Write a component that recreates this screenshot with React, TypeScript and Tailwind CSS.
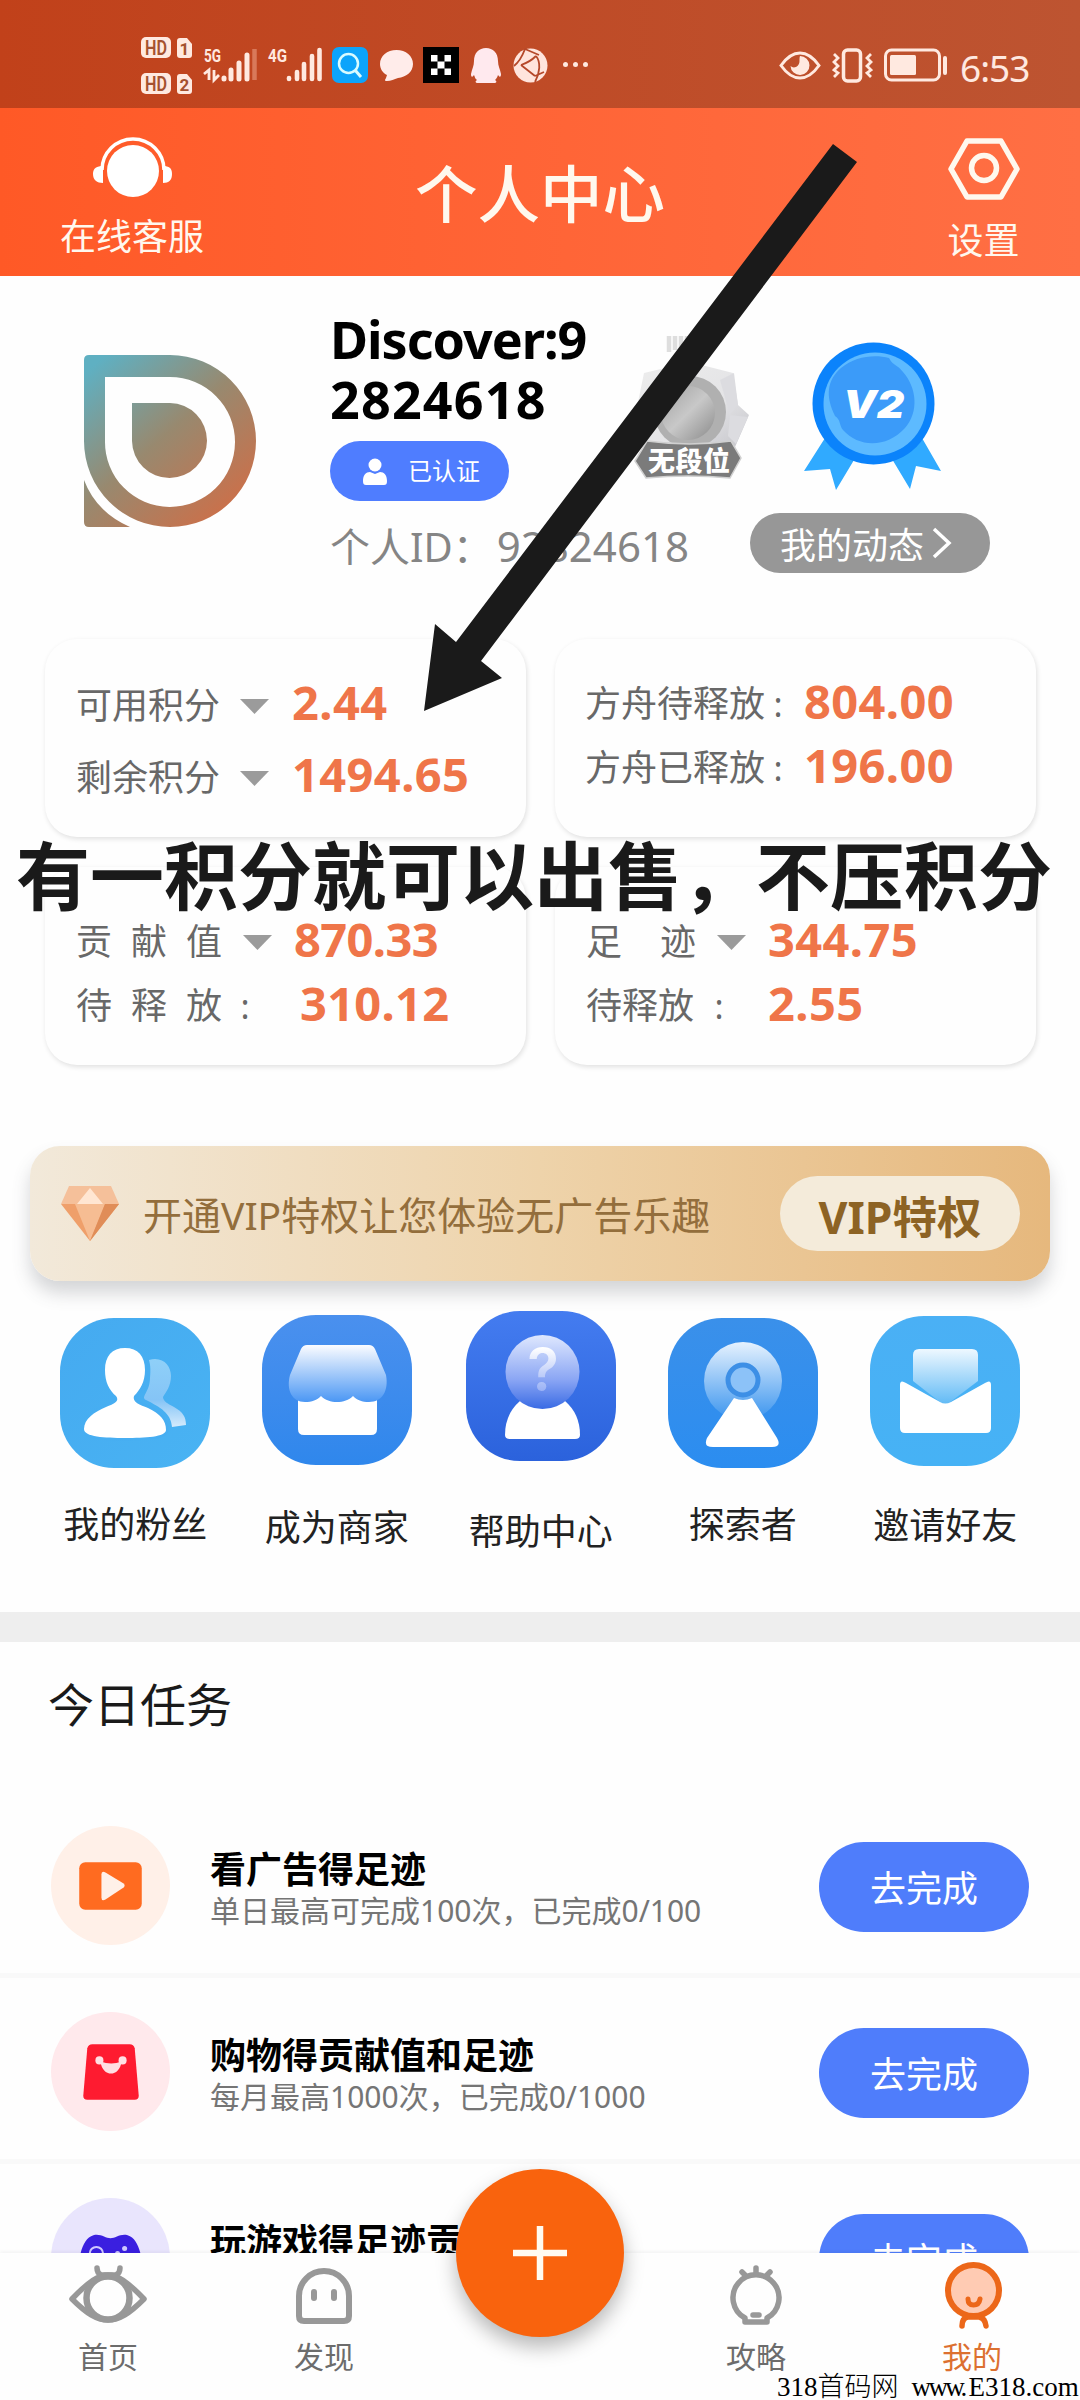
import React from 'react';
import { clsx } from 'clsx';

const GRAY = '#989898';

interface StatRow {
  label: string;
  labelClass: string;
  mark: 'caret' | 'colon';
  markClass: string;
  value: string;
  valueClass: string;
}

interface StatCard {
  padClass: string;
  rowClass: string;
  rows: StatRow[];
}

const statCards: StatCard[] = [
  {
    padClass: 'pt-[31px] pl-[31px] h-[198px]',
    rowClass: 'h-[72px]',
    rows: [
      { label: '可用积分', labelClass: 'w-[164px]', mark: 'caret', markClass: '', value: '2.44', valueClass: '-mt-[8px] ml-[23px] tracking-[0.4px]' },
      { label: '剩余积分', labelClass: 'w-[164px]', mark: 'caret', markClass: '', value: '1494.65', valueClass: '-mt-[8px] ml-[23px] tracking-[0.4px]' },
    ],
  },
  {
    padClass: 'pt-[33px] pl-[30px] h-[198px]',
    rowClass: 'h-16',
    rows: [
      { label: '方舟待释放', labelClass: 'w-[180px]', mark: 'colon', markClass: 'w-[26px]', value: '804.00', valueClass: '-mt-[6px] ml-[13px] tracking-[0.4px]' },
      { label: '方舟已释放', labelClass: 'w-[180px]', mark: 'colon', markClass: 'w-[26px]', value: '196.00', valueClass: '-mt-[6px] ml-[13px] tracking-[0.4px]' },
    ],
  },
  {
    padClass: 'pt-[43px] pl-[31px] h-[198px]',
    rowClass: 'h-16',
    rows: [
      { label: '贡献值', labelClass: 'w-[167px] tracking-[19px]', mark: 'caret', markClass: '', value: '870.33', valueClass: '-mt-[5px] ml-[22px] tracking-[-0.6px]' },
      { label: '待释放', labelClass: 'w-[167px] tracking-[19px]', mark: 'colon', markClass: 'w-1', value: '310.12', valueClass: '-mt-[6px] ml-[53px] tracking-[0.3px]' },
    ],
  },
  {
    padClass: 'pt-[43px] pl-[31px] h-[198px]',
    rowClass: 'h-16',
    rows: [
      { label: '足迹', labelClass: 'w-[131px] tracking-[38px]', mark: 'caret', markClass: '', value: '344.75', valueClass: '-mt-[5px] ml-[22px] tracking-[0.4px]' },
      { label: '待释放', labelClass: 'w-[131px]', mark: 'colon', markClass: 'w-1', value: '2.55', valueClass: '-mt-[6px] ml-[47px] tracking-[0.4px]' },
    ],
  },
];

function StatusBar() {
  return (
    <div className="flex h-[108px] shrink-0 bg-gradient-to-r from-[#c1411a] to-[#bd5431] text-[#ffe9e0]">
      <div className="ml-[141px] mt-[37px] flex flex-col gap-[15px]">
        {['1', '2'].map((n) => (
          <svg key={n} className="h-[21px] w-[51px] overflow-visible" viewBox="0 0 51 21">
            <rect width="30" height="21" rx="5" fill="#ffe9e0" />
            <path d="M39 1h7l5 6v11q0 3-3 3h-9q-3 0-3-3V4q0-3 3-3Z" fill="#ffe9e0" />
            <text x="4" y="17.500" textLength="22" lengthAdjust="spacingAndGlyphs" fontFamily="Roboto" fontWeight="600" fontSize="20" fill="#a5512f">HD</text>
            <text x="43.500" y="18" textAnchor="middle" fontFamily="Roboto" fontWeight="700" fontSize="17" fill="#a5512f">{n}</text>
          </svg>
        ))}
      </div>

      {/* Signal strength, one block per SIM */}
      <svg className="ml-[12px] mt-[47px] h-9 w-[53px] overflow-visible" viewBox="0 0 53 36">
        <text x="0" y="15" textLength="17" lengthAdjust="spacingAndGlyphs" fontFamily="Roboto" fontWeight="700" fontSize="19" fill="#ffe9e0">5G</text>
        <path d="M0 27l5-4v10M10 23v10l5-5" stroke="#ffe9e0" strokeWidth="2.800" fill="none" />
        <path d="M20 31v1M27 23v9M35 16v16M43 8v24" stroke="#ffe9e0" strokeWidth="5" strokeLinecap="round" />
        <path d="M50.500 2v31" stroke="#d8795a" strokeWidth="4.500" />
      </svg>
      <svg className="ml-[11px] mt-[47px] h-9 w-[54px] overflow-visible" viewBox="0 0 54 36">
        <text x="0" y="15" textLength="19" lengthAdjust="spacingAndGlyphs" fontFamily="Roboto" fontWeight="700" fontSize="19" fill="#ffe9e0">4G</text>
        <path d="M21 31v1M29 25v7M36 17v15M44 9v23M51.500 3v29" stroke="#ffe9e0" strokeWidth="4.600" strokeLinecap="round" />
      </svg>

      <svg className="ml-[10px] mt-[47px] size-9" viewBox="0 0 36 36">
        <rect width="36" height="36" rx="7" fill="#0ca4fb" />
        <circle cx="16.500" cy="16.500" r="9.500" fill="none" stroke="#d8fbff" strokeWidth="2.500" />
        <path d="M23 23l6 7" stroke="#d8fbff" strokeWidth="3" />
      </svg>
      <svg className="ml-[11px] mt-[49px] h-[34px] w-[35px]" viewBox="0 0 35 34">
        <path d="M17.500 1C27 1 34 7 34 15s-7 13-15 14c-4 1-7 3-11 3-3 0-2-1-1-3l1-3C4 24 1 20 1 15 1 7 8 1 17.500 1Z" fill="#ffecea" />
      </svg>
      <svg className="ml-[9px] mt-[47px] size-9" viewBox="0 0 36 36">
        <path d="M0 0h36v36H0z" fill="#000" />
        <path d="M8 8h6.500v6.500H8zM21.500 8H28v6.500h-6.500zM14.500 14.500h7v7h-7zM8 21.500h6.500V28H8zM21.500 21.500H28V28h-6.500z" fill="#fff" />
      </svg>
      <svg className="ml-[12px] mt-[47px] h-9 w-[30px]" viewBox="0 0 30 36">
        <path d="M15 1c7 0 12 5 12 13 0 5 2 8 3 13 0 3-1 4-3 1-1 3-2 4-3 5 2 1 2 3-1 3H7c-3 0-3-2-1-3-2-1-2-3-3-5-2 3-3 2-3-1 1-5 3-8 3-13C3 6 8 1 15 1Z" fill="#ffe9ee" />
      </svg>
      <svg className="ml-[12px] mt-[48px] size-[35px]" viewBox="0 0 35 35">
        <circle cx="17.500" cy="17.500" r="17" fill="#ffe4dc" />
        <path d="M12 1l14 6M12 1C9 9 6 14 1 18M23 8c5 6 4 17-1 26M8 17l14 11M8 17c6-2 11-5 15-9M22 28l9-4" stroke="#b5482a" strokeWidth="1.800" fill="none" />
      </svg>
      <div className="ml-[15px] mt-[62px] flex gap-[5px]">
        <i className="size-[5px] rounded-full bg-[#ffe9e0]" />
        <i className="size-[5px] rounded-full bg-[#ffe9e0]" />
        <i className="size-[5px] rounded-full bg-[#ffe9e0]" />
      </div>

      <svg className="ml-auto mt-[51px] h-[29px] w-[42px]" viewBox="0 0 42 29">
        <path d="M2 14.500C8 6 14 2 21 2s13 4 19 12.500C34 23 28 27 21 27S8 23 2 14.500Z" fill="none" stroke="#ffe9e0" strokeWidth="3" />
        <path d="M21 5a9.500 9.500 0 1 1-9.500 10c3 3 9 1 9-5 0-2 0-4 .5-5Z" fill="#ffe9e0" />
      </svg>
      <svg className="ml-[11px] mt-[48px] h-[35px] w-[41px]" viewBox="0 0 41 35">
        <rect x="11.500" y="2" width="17" height="31" rx="4" fill="none" stroke="#ffe9e0" strokeWidth="3.500" />
        <path d="M2 6l4 4-4 4 4 4-4 4 4 3-4 4M39 6l-4 4 4 4-4 4 4 4-4 3 4 4" fill="none" stroke="#ffe9e0" strokeWidth="2.800" />
      </svg>
      <svg className="ml-[11px] mt-[48px] h-[35px] w-[64px]" viewBox="0 0 64 35">
        <rect x="1.500" y="2" width="54" height="30" rx="6" fill="none" stroke="#ffe9e0" strokeWidth="3" />
        <rect x="6" y="7" width="26" height="20" rx="1.500" fill="#ffe9e0" />
        <path d="M61 10v15" stroke="#ffe9e0" strokeWidth="4" strokeLinecap="round" />
      </svg>
      <span className="ml-[12px] mr-[50px] mt-[48px] w-[70px] whitespace-nowrap text-[37px] leading-[40px] tracking-[-1px]">6:53</span>
    </div>
  );
}

function Header() {
  return (
    <header className="flex h-[168px] shrink-0 justify-between bg-gradient-to-r from-[#ff5926] to-[#ff6f44] text-[#fff8ee]">
      <div className="flex w-[264px] flex-col items-center pt-[27px]">
        <svg className="h-[64px] w-[80px]" viewBox="0 0 80 64">
          <circle cx="41" cy="36" r="26" fill="#fff" />
          <path d="M10 35a31 31 0 0 1 62 0" fill="none" stroke="#fff" strokeWidth="3.500" />
          <path d="M11 31v17c-6 0-10-3-10-9s4-8 10-8ZM71 31v17c6 0 9-3 9-9s-3-8-9-8Z" fill="#fff" />
        </svg>
        <span className="mt-[16px] text-[36px] leading-[44px]">在线客服</span>
      </div>
      <h1 className="pt-[51px] text-[62.500px] font-medium leading-[70px]">个人中心</h1>
      <div className="flex w-[264px] flex-col items-center pl-[71px] pt-[29px]">
        <svg className="h-[64px] w-[72px]" viewBox="0 0 72 64">
          <path d="M19 4h34l16 28-16 28H19L3 32Z" fill="none" stroke="#fff8ee" strokeWidth="5.500" strokeLinejoin="round" />
          <circle cx="36" cy="31" r="12.500" fill="none" stroke="#fff8ee" strokeWidth="5.500" />
        </svg>
        <span className="mt-[18px] text-[36px] leading-[44px]">设置</span>
      </div>
    </header>
  );
}

function BrandMark() {
  return (
    <svg className="size-[172px]" viewBox="0 0 172 172">
      <defs>
        <linearGradient id="brand" gradientUnits="userSpaceOnUse" x1="10" y1="10" x2="140" y2="160">
          <stop offset="0" stopColor="#5fb0c2" />
          <stop offset="0.5" stopColor="#98896f" />
          <stop offset="1" stopColor="#cb704a" />
        </linearGradient>
      </defs>
      <path
        fill="url(#brand)"
        fillRule="evenodd"
        d="M0 5q0-5 5-5h81a86 86 0 0 1 0 172A86 86 0 0 1 0 86ZM21 22v64a65 65 0 1 0 65-64ZM48 48h38a37.500 37.500 0 1 1-38 38Z"
      />
      <path fill="url(#brand)" d="M0 125q12 32 46 47H5q-5 0-5-5Z" />
    </svg>
  );
}

function RankBadge() {
  return (
    <svg className="h-[145px] w-[116px]" viewBox="34 15 116 145">
      <defs>
        <linearGradient id="metal" x1="0" y1="0" x2="1" y2="1">
          <stop offset="0" stopColor="#ededed" />
          <stop offset="0.6" stopColor="#e4e4e6" />
          <stop offset="1" stopColor="#c4c4ca" />
        </linearGradient>
        <linearGradient id="core" x1="0" y1="0" x2="1" y2="1">
          <stop offset="0" stopColor="#a0a0a0" />
          <stop offset="0.5" stopColor="#c8c8c8" />
          <stop offset="1" stopColor="#8a8a8a" />
        </linearGradient>
      </defs>
      <path d="M69 16v16M75 16v14M81 16v12M87 16v10" stroke="#dedede" strokeWidth="4.500" />
      <path d="M90 42l43 11 5 32 11 10-14 32H50L36 92l8-39Z" fill="url(#metal)" />
      <path d="M120 60l14-7 4 32-8 10M130 95l18 2-12 27-8-8Z" fill="#dcdce0" />
      <circle cx="90" cy="92" r="36" fill="#b0b0b0" />
      <circle cx="88" cy="93" r="27" fill="url(#core)" />
      <path d="M47 121q43 6 84 0l10 17-11 20q-42-4-84 0L35 141Z" fill="#7b7b7b" stroke="#d0d0d0" strokeWidth="1.500" />
      <text x="48" y="151" textLength="82" fontFamily="'Noto Sans CJK SC', sans-serif" fontWeight="900" fontSize="27" fill="#fff">无段位</text>
    </svg>
  );
}

function LevelMedal() {
  return (
    <svg className="h-[150px] w-[140px]" viewBox="204 20 140 150">
      <path d="M226 117l-21 33 26-2 6 21 18-30ZM323 117l19 33-25-5-6 23-18-30Z" fill="#30aaff" />
      <circle cx="274.500" cy="82.500" r="61" fill="#0b83fb" />
      <circle cx="276" cy="83" r="51.500" fill="#5dbaff" />
      <path d="M290 37c4 8 8 6 14 14 14 16 16 40 2 56-18 20-46 20-62 2-4-5-2-10-8-14-10-20-8-36 6-48 14-12 34-14 48-10Z" fill="#3b9bf9" />
      <text x="244" y="97" textLength="61" lengthAdjust="spacingAndGlyphs" fontFamily="Inter, sans-serif" fontWeight="900" fontStyle="italic" fontSize="39" fill="#fff">V2</text>
    </svg>
  );
}

function Profile() {
  return (
    <section className="flex h-[363px] shrink-0">
      <div className="ml-[84px] mt-[79px]">
        <BrandMark />
      </div>
      <div className="ml-[74px] mt-[33px] w-[290px]">
        <p className="w-[290px] text-[52px] font-bold leading-[60px] text-black">
          <span className="block tracking-[-1px]">Discover:9</span>
          <span className="block tracking-[1.2px]">2824618</span>
        </p>
        <div className="mt-[12px] flex h-[60px] w-[179px] items-center rounded-full bg-[#4f7dff] pl-[32px] text-white">
          <svg className="h-[27px] w-[26px]" viewBox="0 0 26 27">
            <circle cx="13" cy="7" r="6.500" fill="#fff" />
            <path d="M1 23c0-6 3-9 7-9l5 2 5-2c4 0 7 3 7 9 0 3-1 4-3 4H4c-2 0-3-1-3-4Z" fill="#fff" />
          </svg>
          <span className="ml-[20px] text-[24px]">已认证</span>
        </div>
        <p className="mt-[17px] whitespace-nowrap text-[40px] leading-[56px] text-[#858585]">
          个人ID：<span className="ml-[4px] text-[42px]">92824618</span>
        </p>
      </div>
      <div className="ml-[14px] mt-[59px]">
        <RankBadge />
      </div>
      <div className="mt-[65px] flex w-[240px] flex-col items-center">
        <div className="pl-[6px]">
          <LevelMedal />
        </div>
        <button className="mt-[22px] flex h-[60px] w-[240px] items-center rounded-full bg-[#979797] pl-[30px] text-[36px] text-white">
          <span className="pt-[5px]">我的动态</span>
          <svg className="ml-[8px] h-[32px] w-[20px]" viewBox="0 0 20 32">
            <path d="M2 2l15 14L2 30" fill="none" stroke="#fff" strokeWidth="3.500" />
          </svg>
        </button>
      </div>
    </section>
  );
}

function Stats() {
  return (
    <section className="grid shrink-0 grid-cols-[481px_481px] gap-x-[29px] gap-y-[30px] pl-[45px]">
      {statCards.map((card, i) => (
        <div
          key={i}
          className={clsx('rounded-[32px] bg-[#fefefe] shadow-[1px_2px_5px_rgba(0,0,0,0.12)]', card.padClass)}
        >
          {card.rows.map((row) => (
            <div key={row.label} className={clsx('flex items-center', card.rowClass)}>
              <span className={clsx('whitespace-nowrap text-[36px] text-[#686868]', row.labelClass)}>{row.label}</span>
              {row.mark === 'caret' ? (
                <svg className="h-[15px] w-[29px]" viewBox="0 0 29 15">
                  <path d="M0 0h29L14.500 15Z" fill="#9b9b9b" />
                </svg>
              ) : (
                <span className={clsx('flex justify-center text-[34px] text-[#686868]', row.markClass)}>:</span>
              )}
              <span className={clsx('text-[47px] font-bold leading-none text-[#ef7549]', row.valueClass)}>
                {row.value}
              </span>
            </div>
          ))}
        </div>
      ))}
    </section>
  );
}

function VipBanner() {
  return (
    <section className="mx-[30px] mt-[81px] flex h-[135px] shrink-0 items-center rounded-[30px] bg-gradient-to-r from-[#f2e9da] via-[#eed3aa] to-[#e6b87d] pl-[31px] shadow-[0_12px_18px_rgba(80,85,90,0.24)]">
      <svg className="h-[55px] w-[58px]" viewBox="0 0 58 55">
        <path d="M8 0h42l8 18H0Z" fill="#f5c09a" />
        <path d="M29 2L16 18h26Z" fill="#ffe6d2" />
        <path d="M0 18h58L29 55Z" fill="#ef9f6a" />
        <path d="M14 18h30L29 55Z" fill="#f6bd93" />
        <path d="M44 18h14L29 55Z" fill="#e08d58" />
      </svg>
      <span className="ml-[24px] w-[570px] whitespace-nowrap pt-[4px] text-[39px] text-[#936e3c]">开通VIP特权让您体验无广告乐趣</span>
      <button className="ml-[67px] h-[75px] w-[240px] rounded-full bg-[#f4ebda] pt-[6px] text-[44.500px] font-bold leading-[66px] text-[#8d6324]">
        VIP特权
      </button>
    </section>
  );
}

const shortcuts = [
  {
    label: '我的粉丝',
    className: 'pt-[7px]',
    tileClass: 'bg-gradient-to-br from-[#45aaf0] to-[#49b3f3]',
    labelClass: 'mt-[35px]',
    art: (
      <>
        <path d="M89 42c14-4 22 6 22 16s-5 16-8 21c0 4 5 7 11 10 9 5 12 10 12 18l-14 2c-1-14-12-20-26-27-6-3 4-8 4-22 1-10 0-14-1-18Z" fill="url(#fade)" />
        <path d="M65 30c13 0 20 8 20 22 0 12-5 20-11 26-2 6 6 9 14 12 12 6 18 12 18 22 0 7-21 8-41 8s-41-1-41-9c0-10 10-17 22-22 8-3 14-6 10-11-7-6-11-14-11-26 0-14 7-22 20-22Z" fill="#fff" stroke="#47aef2" strokeWidth="5" paintOrder="stroke" />
      </>
    ),
  },
  {
    label: '成为商家',
    className: 'pt-[4px] pr-[2px]',
    tileClass: 'bg-gradient-to-b from-[#4a90ee] to-[#2f87ec]',
    labelClass: 'mt-[41px]',
    art: (
      <>
        <path d="M36 80h79v34q0 6-6 6H42q-6 0-6-6Z" fill="#fff" />
        <path d="M45 30h62q4 0 6 4l11 26c3 16-4 27-17 27-7 0-12-2-16-6-8 8-24 8-32 0-4 4-9 6-16 6-13 0-19-12-15-27l11-26q2-4 6-4Z" fill="url(#awning)" />
      </>
    ),
  },
  {
    label: '帮助中心',
    className: 'pl-[1px]',
    tileClass: 'bg-gradient-to-b from-[#447cf0] to-[#2b62dc]',
    labelClass: 'mt-[49px]',
    art: (
      <>
        <path d="M54 90h45q15 13 15 34 0 4-5 4H44q-5 0-5-4 0-21 15-34Z" fill="#fff" />
        <circle cx="76.500" cy="61" r="37" fill="url(#helphead)" />
        <text x="77" y="79" textAnchor="middle" fontFamily="Inter, sans-serif" fontWeight="600" fontSize="58" fill="url(#question)">?</text>
      </>
    ),
  },
  {
    label: '探索者',
    className: 'pt-[7px]',
    tileClass: 'bg-gradient-to-b from-[#3a90ea] to-[#2b8df0]',
    labelClass: 'mt-[35px]',
    art: (
      <>
        <circle cx="75" cy="63" r="39" fill="url(#halo)" />
        <circle cx="75" cy="62" r="15" fill="#8cc2f8" stroke="#3d8fe6" strokeWidth="5" />
        <path d="M66 80q9 4 18 0l25 40q5 9-5 9H45q-10 0-6-9Z" fill="#fff" />
      </>
    ),
  },
  {
    label: '邀请好友',
    className: 'pt-[5px]',
    tileClass: 'bg-gradient-to-b from-[#4ab0f5] to-[#46b2f5]',
    labelClass: 'mt-[38px]',
    art: (
      <>
        <path d="M49 33h53q6 0 6 6v26L75 90 43 65V39q0-6 6-6Z" fill="url(#paper)" />
        <path d="M36 67l34 19q5 3 11 0l34-19q6-4 6 2v43q0 5-5 5H35q-5 0-5-5V69q0-6 6-2Z" fill="#fff" />
      </>
    ),
  },
];

function Shortcuts() {
  return (
    <section className="mt-[30px] flex h-[301px] shrink-0 gap-[2px] pl-[35px]">
      <svg className="absolute size-0">
        <defs>
          <linearGradient id="fade" x1="0" y1="0" x2="0" y2="1">
            <stop offset="0" stopColor="#8fd0f8" />
            <stop offset="0.6" stopColor="#85c4f6" />
            <stop offset="1" stopColor="#d5ebfc" />
          </linearGradient>
          <linearGradient id="awning" x1="0" y1="0" x2="0" y2="1">
            <stop offset="0" stopColor="#fbfcff" />
            <stop offset="1" stopColor="#4b97f4" />
          </linearGradient>
          <linearGradient id="helphead" x1="0" y1="0" x2="0" y2="1">
            <stop offset="0" stopColor="#dfe8fe" />
            <stop offset="0.6" stopColor="#8ba6f4" />
            <stop offset="1" stopColor="#3a6be4" />
          </linearGradient>
          <linearGradient id="question" x1="0" y1="0" x2="0" y2="1">
            <stop offset="0.2" stopColor="#ffffff" />
            <stop offset="0.9" stopColor="#8ba6f4" />
          </linearGradient>
          <linearGradient id="halo" x1="0" y1="0" x2="0" y2="1">
            <stop offset="0" stopColor="#e6f2fe" />
            <stop offset="1" stopColor="#3a94ee" />
          </linearGradient>
          <linearGradient id="paper" x1="0" y1="0" x2="0" y2="1">
            <stop offset="0" stopColor="#eef8ff" />
            <stop offset="1" stopColor="#5cb8f5" />
          </linearGradient>
        </defs>
      </svg>
      {shortcuts.map((item) => (
        <div key={item.label} className={clsx('flex w-[200.500px] flex-col items-center', item.className)}>
          <div className={clsx('size-[150px] rounded-[54px]', item.tileClass)}>
            <svg viewBox="0 0 150 150">{item.art}</svg>
          </div>
          <span className={clsx('text-[36px] leading-[44px] text-[#222]', item.labelClass)}>{item.label}</span>
        </div>
      ))}
    </section>
  );
}

const tasks = [
  {
    title: '看广告得足迹',
    desc: '单日最高可完成100次，已完成0/100',
    circleClass: 'bg-[#fff0e8]',
    art: (
      <>
        <rect x="28" y="36" width="62" height="47" rx="6" fill="#ff6b20" />
        <path d="M50 48q0-4 4-2l18 11q2 2 0 4L54 73q-4 2-4-2Z" fill="#fff0e8" />
      </>
    ),
  },
  {
    title: '购物得贡献值和足迹',
    desc: '每月最高1000次，已完成0/1000',
    circleClass: 'bg-[#ffe9ec]',
    art: (
      <>
        <path d="M41 32h37q4 0 5 4l4 47q0 4-4 4H36q-4 0-4-4l4-47q1-4 5-4Z" fill="#fe1b30" />
        <path d="M49 49c2 16 19 16 21 0q-10 4-21 0Z" fill="#ffdfe3" />
        <circle cx="48" cy="48" r="4" fill="#ffdfe3" />
        <circle cx="71" cy="48" r="4" fill="#ffdfe3" />
      </>
    ),
  },
  {
    title: '玩游戏得足迹贡献值',
    desc: '单日最高可完成100次，已完成0/100',
    circleClass: 'bg-[#e9e5fd]',
    art: (
      <>
        <path d="M42 37c7-2 12 3 17 3s10-5 17-3c10 3 14 18 15 34 0 12-9 12-14 4l-5-6H46l-5 6c-5 8-14 8-14-4 1-16 5-31 15-34Z" fill="#3a1fe0" />
        <circle cx="45" cy="55" r="6.500" fill="none" stroke="#cfc8ff" strokeWidth="2" />
        <circle cx="73" cy="50" r="2.500" fill="#cfc8ff" />
        <circle cx="66" cy="55" r="2.500" fill="#cfc8ff" />
      </>
    ),
  },
];

function Tasks() {
  return (
    <section className="flex-1 overflow-hidden border-t-[30px] border-[#eeeeee]">
      <h2 className="ml-[48px] mt-[32px] text-[46px] leading-[60px] text-[#1a1a1a]">今日任务</h2>
      <div className="mt-[58px]">
        {tasks.map((task) => (
          <div key={task.title} className="flex h-[186px] items-center border-b-[5px] border-[#f9f9f9] pl-[51px] pr-[51px] pt-[6px]">
            <div className={clsx('size-[119px] shrink-0 rounded-full', task.circleClass)}>
              <svg viewBox="0 0 118 118">{task.art}</svg>
            </div>
            <div className="ml-[40px] flex-1 whitespace-nowrap">
              <p className="mt-[7px] text-[36px] font-bold leading-[44px] text-black">{task.title}</p>
              <p className="text-[30px] leading-[38px] text-[#757575]">{task.desc}</p>
            </div>
            <button className="mt-[3px] h-[90px] w-[210px] rounded-full bg-[#4f7dfb] pt-[4px] text-[36px] text-white">去完成</button>
          </div>
        ))}
      </div>
    </section>
  );
}

const tabs = [
  {
    label: '首页',
    icon: (
      <svg className="mt-[12px] h-[59px] w-[78px]" viewBox="0 0 78 59" fill="none" stroke={GRAY} strokeLinecap="round" strokeLinejoin="round">
        <path d="M28 3q0 5 4 7h15q4-2 4-7" strokeWidth="5.500" />
        <path d="M3 34c17-18 27-24 36-24s19 6 36 24C60 49 50 55 39 55S18 49 3 34Z" strokeWidth="5.500" />
        <circle cx="39" cy="33" r="21.500" strokeWidth="6.500" />
      </svg>
    ),
  },
  {
    label: '发现',
    icon: (
      <svg className="mt-[15px] h-[56px] w-[56px]" viewBox="0 0 56 56" fill="none" stroke={GRAY} strokeLinecap="round">
        <path d="M3 48V28a25 25 0 0 1 50 0v20q0 5-5 5H8q-5 0-5-5Z" strokeWidth="6" />
        <path d="M18 24v6M38 24v6" strokeWidth="6" />
      </svg>
    ),
  },
  { label: '', icon: null },
  {
    label: '攻略',
    icon: (
      <svg className="mt-[12px] h-[61px] w-[52px]" viewBox="0 0 52 61" fill="none" stroke={GRAY} strokeLinecap="round" strokeLinejoin="round">
        <path d="M15 53A23 23 0 1 1 37 53v4H15Z" strokeWidth="5.500" />
        <path d="M26 3v6M12 7l3 3M40 7l-3 3M23 50h6" strokeWidth="5.500" />
      </svg>
    ),
  },
  {
    label: '我的',
    icon: (
      <svg className="ml-[2px] mt-[9px] h-[67px] w-[57px]" viewBox="0 0 57 67" fill="none" stroke="#ec6719" strokeLinecap="round">
        <circle cx="28.500" cy="28.500" r="25.500" fill="#ffcbb3" strokeWidth="6" />
        <path d="M23 37q0 6 5.500 6T35 37" strokeWidth="5" />
        <path d="M17 64q0-8 6-9h11q6 1 7 9" strokeWidth="5.500" />
      </svg>
    ),
  },
];

function TabBar() {
  return (
    <nav className="relative grid h-[147px] shrink-0 grid-cols-5 bg-[#fefefe] shadow-[0_-2px_3px_rgba(0,0,0,0.04)]">
      {tabs.map((tab, i) => (
        <div key={i} className="flex flex-col items-center justify-between pb-[23px]">
          {tab.icon}
          <span className={clsx('text-[30px] leading-[40px]', tab.label === '我的' ? 'text-[#dc7030]' : 'text-[#6c6c6c]')}>
            {tab.label}
          </span>
        </div>
      ))}
      <button className="absolute -top-[84px] left-[456px] flex size-[168px] items-center justify-center rounded-full bg-[#f9630d] shadow-[0_10px_20px_rgba(0,0,0,0.28)]">
        <svg className="size-[54px]" viewBox="0 0 54 54">
          <path d="M27 0v54M0 27h54" stroke="#fffaf0" strokeWidth="6.500" />
        </svg>
      </button>
      <p className="absolute -bottom-[2px] left-[777px] whitespace-nowrap font-['Liberation_Serif','Noto_Sans_CJK_SC',serif] text-[27px] leading-[30px] text-black">
        318<span className="font-light">首码网</span>
        <span className="ml-[13px] tracking-[-2.600px]">www.</span>
        <span className="ml-[4px]">E318.com</span>
      </p>
    </nav>
  );
}

export default function App() {
  return (
    <div className="relative flex h-[2400px] w-[1080px] flex-col overflow-hidden bg-[#fefefe] font-['Noto_Sans','Noto_Sans_CJK_SC',sans-serif]">
      <StatusBar />
      <Header />
      <Profile />
      <Stats />
      <VipBanner />
      <Shortcuts />
      <Tasks />
      <TabBar />

      {/* Hand-drawn annotations laid over the page */}
      <svg className="absolute left-[420px] top-[140px] h-[575px] w-[440px]" viewBox="420 140 440 575">
        <path d="M833 144l24 18-376 499 21 17-78 33 11-87 21 18Z" fill="#1a1a1a" />
      </svg>
      <p className="absolute left-[16px] top-[831px] whitespace-nowrap text-[74px] font-bold leading-[90px] text-[#1a1a1a]">
        有一积分就可以出售，不压积分
      </p>
    </div>
  );
}
